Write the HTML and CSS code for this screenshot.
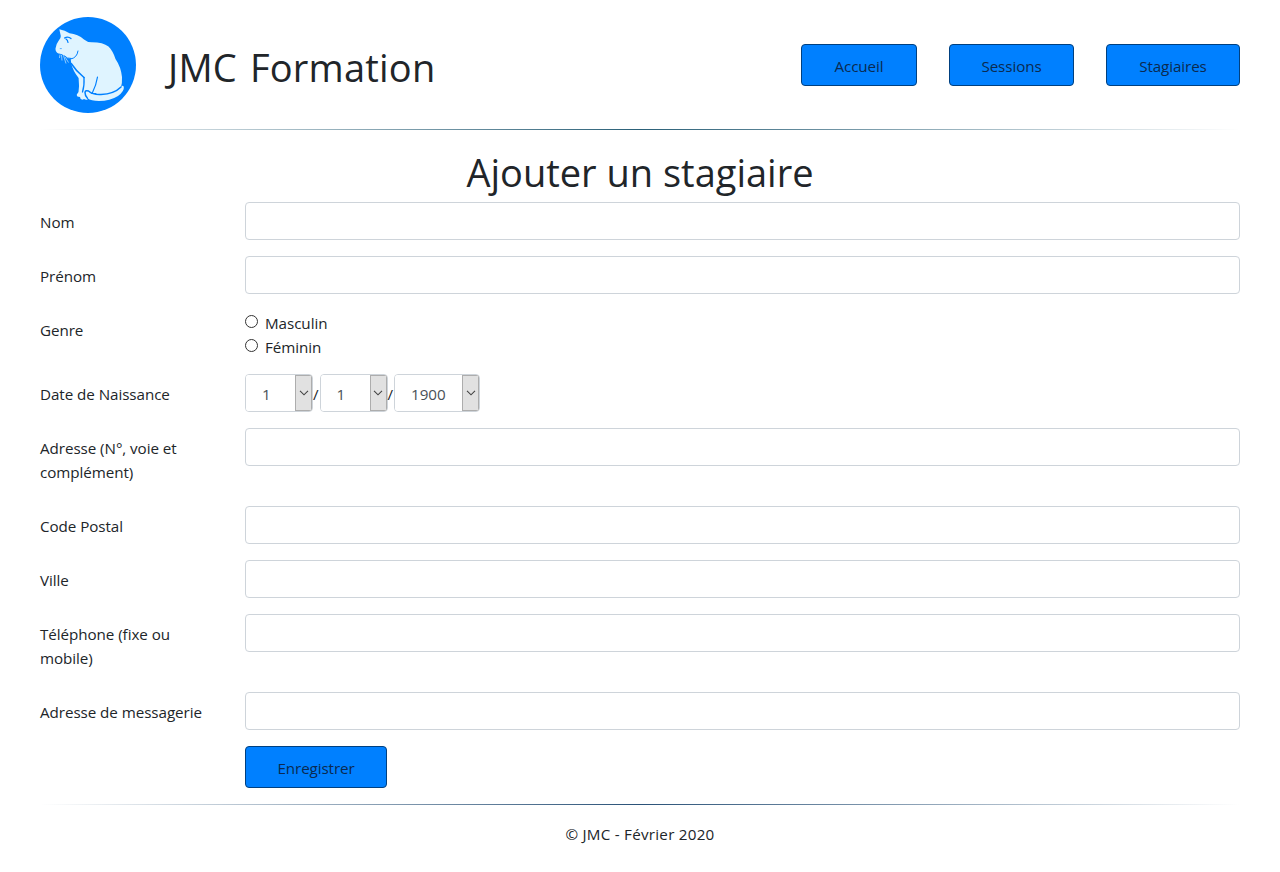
FILE: index.html
```html
<!DOCTYPE html>
<html lang="fr">
<head>
<meta charset="utf-8">
<title>JMC Formation</title>
<link rel="stylesheet" href="styles.css">
</head>
<body>
<header class="header">
  <svg class="logo" viewBox="0 0 96 96" aria-hidden="true">
    <circle cx="48" cy="48" r="48" fill="#0080ff"/>
    <path fill="#dff4ff" d="M19.3 12.3Q25 13.500 29.500 16.200Q38 17 44 22.500Q47 25.300 52 25.200Q63 25.300 68.500 29.500Q73 34 75.500 42Q81 50 82 60Q82.300 66 81 70Q83 67.500 83.800 70Q84.500 74 78 79Q70 84 59 84Q51 84 47.500 81.300L47.800 82.300Q46 83.500 44 82L42.500 82.800Q40 82.500 40 80Q36.500 80 36.800 77.500L38.500 75Q39.500 69 38.600 61Q33 54 31.200 46.500L30.700 42Q27 42 24.500 39Q22 36.300 18.500 36.500Q15.300 35 15.500 31.500Q16 27 18.800 23.500Q21 21 20.800 19Z"/>
    <g fill="none" stroke="#0080ff" stroke-linecap="round">
      <path stroke-width="1" d="M30.700 42Q37 41 38 34M24.500 39Q27 42 31 41.500"/>
      <path stroke-width="1.500" d="M31.200 46.500Q36 54 44 60.500"/>
      <path stroke-width="1.300" d="M44 60.500Q44.500 69 42.500 75"/>
      <path stroke-width="1.200" d="M24.500 21Q28 18.800 31 21.500M26 22Q27.800 23 28 25.500M57.500 60Q56 69 52.500 75.500"/>
      <path stroke-width="1.500" d="M81 70Q74 77 61 77.500Q53 78 48.500 74Q45.500 72.800 45 75.500Q45 79 47.500 81.300"/>
      <path stroke-width="1" d="M51.500 76.500H56"/>
    </g>
    <path fill="none" stroke="#9ed4ff" stroke-width=".9" d="M20 37.500L19.500 41M21.500 38L22 43.500M23.500 38.500L26 46.500M25 40L28.500 45.500"/>
    <path fill="none" stroke="#4aa8ff" stroke-width=".9" d="M19.800 31.600H21.800"/>
  </svg>
  <div class="brand">JMC Formation</div>
  <nav class="nav">
    <a class="btn btn-home">Accueil</a>
    <a class="btn btn-sessions">Sessions</a>
    <a class="btn btn-trainees">Stagiaires</a>
  </nav>
</header>
<hr class="rule rule-top">
<main>
  <h1 class="title">Ajouter un stagiaire</h1>
  <form class="form">
    <div class="row"><label class="label" for="nom">Nom</label><input class="control" id="nom"></div>
    <div class="row"><label class="label" for="prenom">Prénom</label><input class="control" id="prenom"></div>
    <div class="row"><span class="label">Genre</span>
      <div class="choices">
        <label class="choice"><input class="radio" type="radio" name="genre">Masculin</label>
        <label class="choice"><input class="radio" type="radio" name="genre">Féminin</label>
      </div>
    </div>
    <div class="row"><span class="label">Date de Naissance</span>
      <div class="date">
        <span class="picker"><select class="value"><option>1</option></select><span class="arrow"><svg viewBox="0 0 10 6"><path d="M1 .8L5 4.800L9 .8"/></svg></span></span>
        <span class="slash">/</span>
        <span class="picker"><select class="value"><option>1</option></select><span class="arrow"><svg viewBox="0 0 10 6"><path d="M1 .8L5 4.800L9 .8"/></svg></span></span>
        <span class="slash">/</span>
        <span class="picker picker-year"><select class="value"><option>1900</option></select><span class="arrow"><svg viewBox="0 0 10 6"><path d="M1 .8L5 4.800L9 .8"/></svg></span></span>
      </div>
    </div>
    <div class="row"><label class="label" for="adresse">Adresse (N°, voie et complément)</label><input class="control" id="adresse"></div>
    <div class="row"><label class="label" for="cp">Code Postal</label><input class="control" id="cp"></div>
    <div class="row"><label class="label" for="ville">Ville</label><input class="control" id="ville"></div>
    <div class="row"><label class="label" for="tel">Téléphone (fixe ou mobile)</label><input class="control" id="tel"></div>
    <div class="row"><label class="label" for="mail">Adresse de messagerie</label><input class="control" id="mail"></div>
    <div class="actions"><button class="btn btn-save" type="button">Enregistrer</button></div>
  </form>
</main>
<hr class="rule">
<footer class="footer">© JMC - Février 2020</footer>
</body>
</html>
```
FILE: styles.css
```css
* { box-sizing: border-box; }
body {
  margin: 0;
  padding: 17px 40px 0;
  background: #fff;
  color: #212529;
  font: 15.2px/24px "Open Sans", "Noto Sans", sans-serif;
  letter-spacing: -.06px;
}
.header { display: flex; align-items: center; height: 96px; }
.logo { width: 96px; height: 96px; }
.brand { margin-left: 32px; padding-top: 3px; font-size: 38px; line-height: 48px; letter-spacing: .2px; word-spacing: 3px; }
.nav { display: flex; gap: 32px; margin-left: auto; }
.btn {
  display: block;
  height: 42px;
  padding: 1px 0 0;
  border: 1px solid #004080;
  border-radius: 4px;
  background: #0080ff;
  color: #0b2a50;
  font: inherit;
  letter-spacing: -.1px;
  line-height: 40px;
  text-align: center;
}
.btn-home { width: 116px; }
.btn-sessions { width: 125px; }
.btn-trainees { width: 134px; }
.btn-save { width: 142px; padding-top: 2px; line-height: 38px; }
.rule {
  height: 1px;
  margin: 16px 0;
  border: 0;
  background: linear-gradient(to right, rgba(42, 82, 120, 0), #2a5278 50%, rgba(42, 82, 120, 0));
}
.rule-top { background: linear-gradient(to right, rgba(42, 88, 120, 0), #2a6078 50%, rgba(60, 120, 120, 0)); }
.title { margin: 0; padding: 2px 0 6px; font-size: 38px; font-weight: 400; line-height: 48px; letter-spacing: 0; text-align: center; }
.form { display: flex; flex-direction: column; gap: 16px; }
.row { display: grid; grid-template-columns: 175px 1fr; column-gap: 30px; align-items: start; }
.label { padding: 8px 0 6px; }
.control { width: 100%; height: 38px; padding: 6px 12px; border: 1px solid #ced4da; border-radius: 4px; background: #fff; font: inherit; }
.choices { display: flex; flex-direction: column; }
.choice { display: flex; align-items: center; height: 24px; padding-top: 2px; }
.radio { appearance: none; width: 13px; height: 13px; margin: -4px 7px 0 0; border: 1px solid #333; border-radius: 50%; background: #fff; }
.date { display: flex; }
.picker { display: flex; width: 68px; height: 38px; border: 1px solid #ced4da; border-radius: 4px; overflow: hidden; }
.picker-year { width: 86px; }
.value { appearance: none; flex: 1; min-width: 0; padding: 2px 0 0 16px; border: 0; background: #fff; color: #495057; font: inherit; }
.arrow { display: flex; align-items: center; justify-content: center; width: 17px; border: 1px solid #adadad; background: #e1e1e1; }
.arrow svg { width: 10px; height: 6px; flex: none; fill: none; stroke: #444; stroke-width: 1.1; }
.slash { width: 6.500px; padding-top: 8px; }
.actions { padding-left: 205px; }
.footer { padding-top: 1px; letter-spacing: .25px; text-align: center; }
```
